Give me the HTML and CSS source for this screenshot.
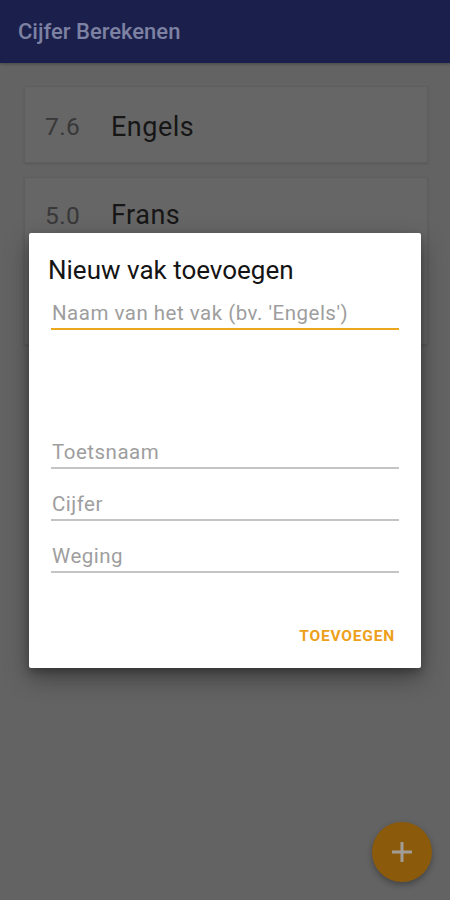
FILE: index.html
```html
<!DOCTYPE html>
<html lang="nl">
<head>
<meta charset="utf-8">
<title>Cijfer Berekenen</title>
<link rel="stylesheet" href="styles.css">
</head>
<body>
<div class="app">
  <header class="appbar">Cijfer Berekenen</header>
  <main class="list">
    <div class="card card-short">
      <span class="score">7.6</span><span class="name">Engels</span>
    </div>
    <div class="card card-tall">
      <div class="row"><span class="score">5.0</span><span class="name">Frans</span></div>
    </div>
  </main>
  <button class="fab" aria-label="Toevoegen">
    <svg width="24" height="24" viewBox="0 0 24 24"><path d="M12 2v20M2 12h20" stroke="#a19d96" stroke-width="3" fill="none"/></svg>
  </button>

  <div class="dialog">
    <h2 class="dialog-title">Nieuw vak toevoegen</h2>
    <div class="field field-active"><span class="ph">Naam van het vak (bv. 'Engels')</span></div>
    <div class="spacer"></div>
    <div class="field"><span class="ph">Toetsnaam</span></div>
    <div class="field"><span class="ph">Cijfer</span></div>
    <div class="field"><span class="ph">Weging</span></div>
    <div class="actions"><span class="btn">TOEVOEGEN</span></div>
  </div>
</div>
</body>
</html>
```
FILE: styles.css
```css
* { box-sizing: border-box; }
html, body { margin: 0; padding: 0; }
body {
  font-family: Roboto, "Noto Sans", sans-serif;
  background: #636363;
}
.app {
  position: relative;
  width: 450px;
  height: 900px;
  overflow: hidden;
  background: #636363;
}
.appbar {
  height: 63px;
  background: #1b1f4c;
  color: #7d82a2;
  font-size: 22px;
  font-weight: 500;
  padding-left: 18px;
  display: flex;
  align-items: center;
  box-shadow: 0 1px 3px rgba(0,0,0,0.3);
}
.list {
  padding: 23px 22px 0 24px;
  display: flex;
  flex-direction: column;
  gap: 14px;
}
.card {
  background: #666666;
  border: 1px solid #5e5e5e;
  box-shadow: 0 1px 2px rgba(0,0,0,0.12);
}
.card-short {
  height: 77px;
  display: flex;
  align-items: center;
  padding: 4px 0 0 20px;
}
.card-tall {
  height: 168px;
  padding: 21px 0 0 20px;
}
.row { display: flex; align-items: center; }
.score {
  font-size: 24.5px;
  color: #383838;
  width: 66px;
  letter-spacing: 0.4px;
}
.name {
  font-size: 27px;
  color: #161616;
  letter-spacing: 0.5px;
}
.fab {
  position: absolute;
  left: 372px;
  top: 822px;
  width: 60px;
  height: 60px;
  border-radius: 50%;
  border: none;
  background: #8b5a0b;
  display: flex;
  align-items: center;
  justify-content: center;
  box-shadow: 0 3px 6px rgba(0,0,0,0.3);
  padding: 0;
}
.dialog {
  position: absolute;
  left: 29px;
  top: 233px;
  width: 392px;
  height: 435px;
  background: #ffffff;
  border-radius: 2px;
  box-shadow: 0 10px 24px rgba(0,0,0,0.35), 0 4px 8px rgba(0,0,0,0.25);
  padding: 23px 22px 0 22px;
  display: flex;
  flex-direction: column;
}
.dialog-title {
  margin: 0 0 0 -3px;
  font-size: 26px;
  font-weight: 400;
  color: #141414;
  line-height: 28px;
}
.field {
  height: 41px;
  border-bottom: 2px solid #c4c4c4;
  display: flex;
  align-items: flex-end;
  padding: 0 0 3px 1px;
  margin-top: 11px;
}
.field-active {
  margin-top: 11px;
  height: 35px;
  border-bottom-color: #eba81e;
}
.ph {
  font-size: 20.5px;
  color: #9e9e9e;
  letter-spacing: 0.5px;
  line-height: 24px;
}
.spacer { height: 87px; }
.actions {
  display: flex;
  justify-content: flex-end;
  padding-top: 54px;
  padding-right: 4px;
}
.btn {
  font-size: 15.5px;
  font-weight: 700;
  color: #eda01a;
  letter-spacing: 0.8px;
}
```
